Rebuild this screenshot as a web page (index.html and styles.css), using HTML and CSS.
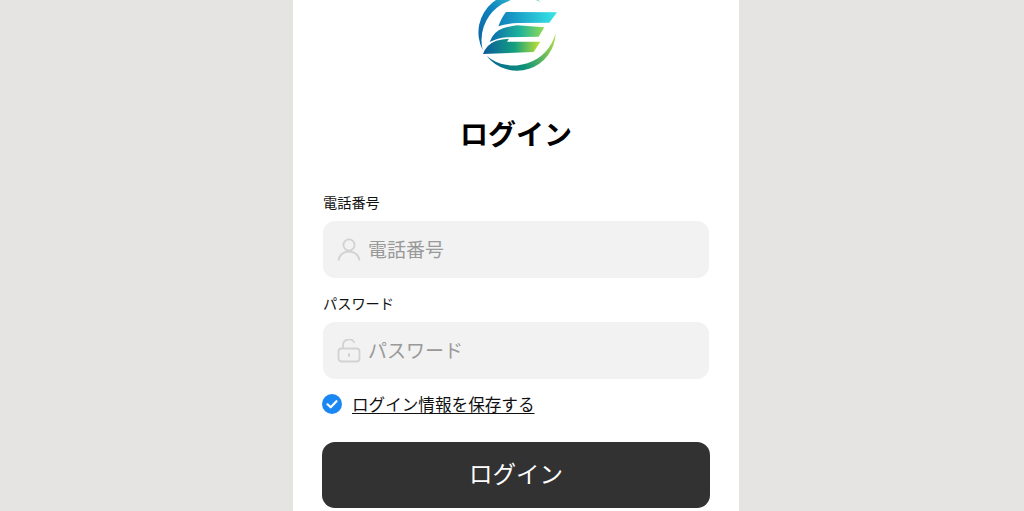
FILE: index.html
```html
<!DOCTYPE html>
<html lang="ja">
<head>
    <meta charset="UTF-8">
    <meta name="viewport" content="width=device-width, initial-scale=1.0">
    <title>ログイン</title>
    <link rel="stylesheet" href="styles.css">
</head>
<body>
    <div class="login-container">
        <div class="logo">
            <svg width="150" height="100" viewBox="0 0 450 300" aria-label="logo">
                <defs>
                    <linearGradient id="ringLeft" x1="0" y1="1" x2="1" y2="0">
                        <stop offset="0" stop-color="#0a5f9e"/>
                        <stop offset="0.5" stop-color="#0f86c0"/>
                        <stop offset="0.85" stop-color="#3fd0cc"/>
                        <stop offset="1" stop-color="#a5dc8c"/>
                    </linearGradient>
                    <linearGradient id="ringBottom" x1="0" y1="0.5" x2="1" y2="0.3">
                        <stop offset="0" stop-color="#0a6a94"/>
                        <stop offset="0.45" stop-color="#0c9178"/>
                        <stop offset="1" stop-color="#a6d84a"/>
                    </linearGradient>
                    <linearGradient id="barTop" x1="0" y1="0" x2="1" y2="0">
                        <stop offset="0" stop-color="#0f7fbb"/>
                        <stop offset="1" stop-color="#38e6e6"/>
                    </linearGradient>
                    <linearGradient id="barMid" x1="0" y1="0" x2="1" y2="0">
                        <stop offset="0" stop-color="#0b6aae"/>
                        <stop offset="0.55" stop-color="#1fb39a"/>
                        <stop offset="1" stop-color="#93dc52"/>
                    </linearGradient>
                    <linearGradient id="barLow" x1="0" y1="0" x2="1" y2="0">
                        <stop offset="0" stop-color="#0a5a9e"/>
                        <stop offset="0.55" stop-color="#14a07e"/>
                        <stop offset="1" stop-color="#c4e232"/>
                    </linearGradient>
                </defs>
                <path fill="url(#ringLeft)" d="M125 150A116 116 0 0 1 300 6A126 126 0 0 0 125 150Z"/>
                <path fill="url(#ringBottom)" d="M137 168A116 116 0 0 0 344 100A130 130 0 0 1 137 168Z"/>
                <path fill="url(#barTop)" d="M195 36L348 37L325 68L232 69Q198 70 172 79Q182 52 195 36Z"/>
                <path fill="url(#barMid)" d="M228 76L310 82L293 110L198 112Q170 114 146 126Q158 94 186 85Q206 79 228 76Z"/>
                <path fill="url(#barLow)" d="M198 125L298 125L278 156L126 162Q136 133 166 122Q182 117 204 116Z"/>
            </svg>
        </div>
        <h1>ログイン</h1>
        <form class="login-form">
            <label class="field-label" for="phone">電話番号</label>
            <div class="field">
                <svg class="field-icon" width="24" height="24" viewBox="0 0 24 24">
                    <circle cx="12" cy="7" r="5.600"/>
                    <path d="M1.500 22.500C2 17 6.500 13.500 12 13.500S22 17 22.500 22.500"/>
                </svg>
                <input type="text" id="phone" placeholder="電話番号">
            </div>
            <label class="field-label" for="password">パスワード</label>
            <div class="field">
                <svg class="field-icon" width="24" height="24" viewBox="0 0 24 24">
                    <rect x="1.500" y="9.500" width="21" height="13" rx="3"/>
                    <path d="M6 9.500V6.500A6 6 0 0 1 17.500 4"/>
                    <path class="keyhole" d="M12 15V17"/>
                </svg>
                <input type="password" id="password" placeholder="パスワード">
            </div>
            <div class="remember">
                <svg width="20" height="20" viewBox="0 0 20 20">
                    <circle cx="10" cy="10" r="10" fill="#1b87f2"/>
                    <path d="M5.500 10.300L8.700 13.300L14.500 7.200" fill="none" stroke="#fff" stroke-width="2.200" stroke-linecap="round" stroke-linejoin="round"/>
                </svg>
                <a href="#">ログイン情報を保存する</a>
            </div>
            <button type="submit">ログイン</button>
        </form>
    </div>
</body>
</html>
```

FILE: styles.css
```css
* {
    margin: 0;
    padding: 0;
    box-sizing: border-box;
}

html, body {
    height: 100%;
    overflow: hidden;
}

body {
    font-family: "Noto Sans CJK JP", "Noto Sans", sans-serif;
    background-color: #e5e4e2;
    display: flex;
    justify-content: center;
    padding-left: 8px;
}

.login-container {
    background-color: white;
    width: 446px;
    height: 511px;
    padding: 0 29px;
}

.logo {
    display: flex;
    justify-content: center;
    height: 100px;
}

h1 {
    font-size: 28px;
    line-height: 40px;
    font-weight: 700;
    color: #000;
    text-align: center;
    margin-top: 13px;
    margin-bottom: 40px;
}

.login-form {
    display: flex;
    flex-direction: column;
}

.field-label {
    font-size: 14.200px;
    line-height: 18px;
    color: #111;
    margin-left: 1px;
    margin-bottom: 10px;
}

.field {
    display: flex;
    align-items: center;
    gap: 7px;
    height: 57px;
    margin: 0 1px 16px;
    padding: 0 14px;
    background-color: #f2f2f2;
    border-radius: 12px;
}

.field-icon {
    flex: none;
    fill: none;
    stroke: #d2d2d2;
    stroke-width: 1.800;
}

.field-icon .keyhole {
    stroke-linecap: round;
    stroke-width: 2;
}

.field input {
    flex: 1;
    min-width: 0;
    border: none;
    outline: none;
    background: none;
    font-family: inherit;
    font-size: 19px;
    padding-bottom: 3px;
}

.field input::placeholder {
    color: #999;
    opacity: 1;
}

.remember {
    display: flex;
    align-items: center;
    gap: 10px;
    height: 24px;
    margin-top: -3px;
}

.remember a {
    font-size: 16.600px;
    color: #111;
    text-decoration: underline;
    text-decoration-skip-ink: none;
    text-underline-offset: 2px;
}

button {
    height: 66px;
    margin-top: 26px;
    padding-bottom: 4px;
    background-color: #323232;
    color: white;
    border: none;
    border-radius: 13px;
    font-family: inherit;
    font-size: 23.500px;
    cursor: pointer;
}
```
